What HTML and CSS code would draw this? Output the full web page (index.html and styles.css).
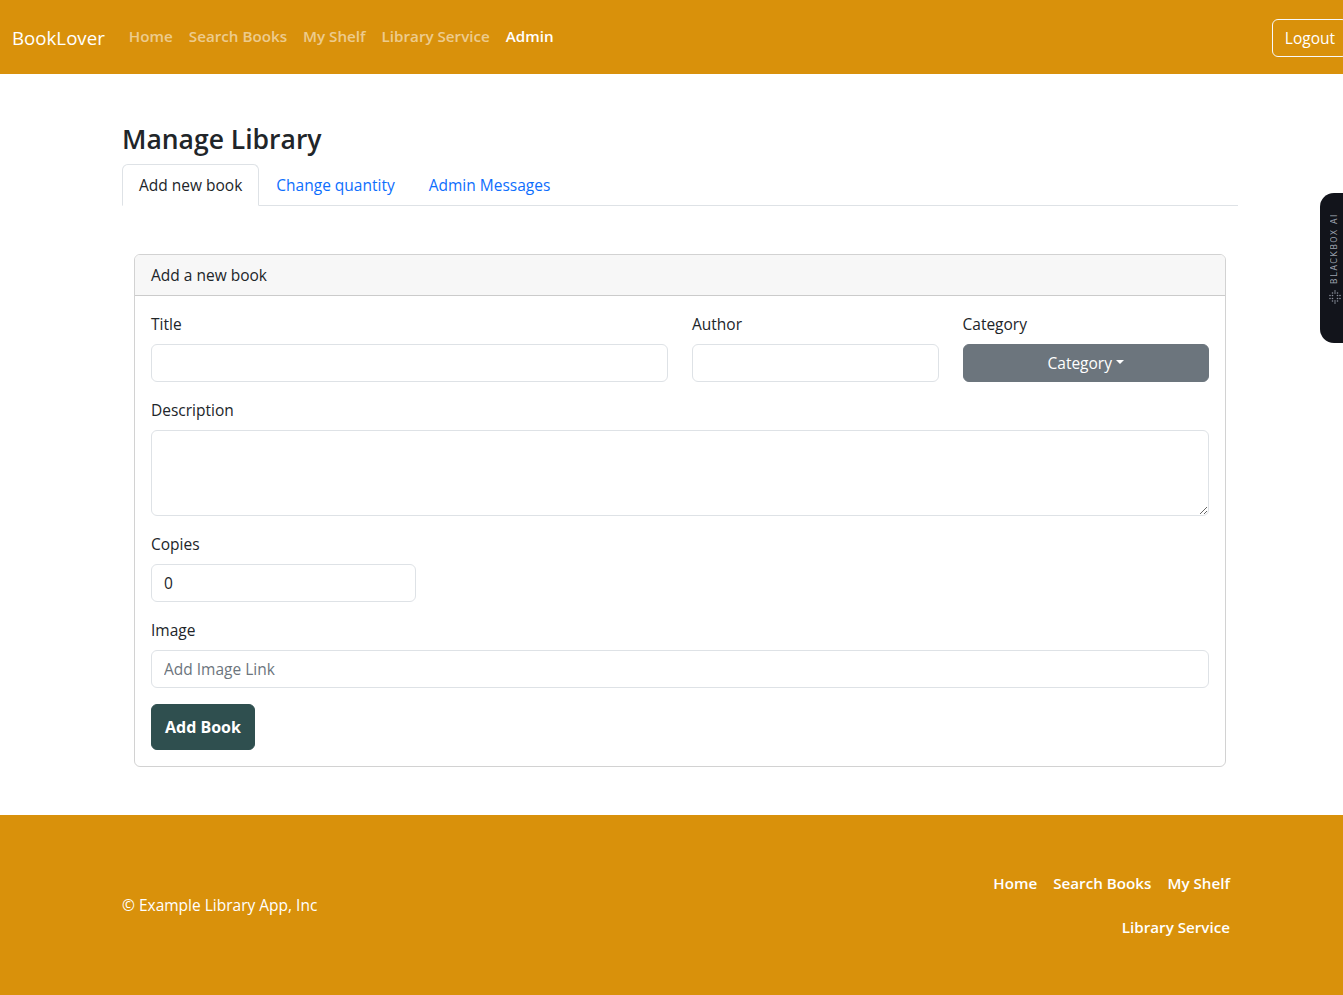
FILE: index.html
```html
<!DOCTYPE html>
<html lang="en">
<head>
<meta charset="utf-8">
<title>BookLover - Admin</title>
<link rel="stylesheet" href="styles.css">
</head>
<body>
<nav class="navbar">
  <a class="brand" href="#">BookLover</a>
  <ul class="nav-links">
    <li><a href="#">Home</a></li>
    <li><a href="#">Search Books</a></li>
    <li><a href="#">My Shelf</a></li>
    <li><a href="#">Library Service</a></li>
    <li><a class="active" href="#">Admin</a></li>
  </ul>
  <button class="btn-logout" type="button">Logout</button>
</nav>

<main class="container page">
  <h3 class="page-title">Manage Library</h3>
  <div class="tabs">
    <button class="tab active" type="button">Add new book</button>
    <button class="tab" type="button">Change quantity</button>
    <button class="tab" type="button">Admin Messages</button>
  </div>
  <div class="tab-content">
    <div class="card">
      <div class="card-header">Add a new book</div>
      <div class="card-body">
        <div class="row">
          <div class="field col-half">
            <label class="label">Title</label>
            <input class="input" type="text">
          </div>
          <div class="field col-quarter">
            <label class="label">Author</label>
            <input class="input" type="text">
          </div>
          <div class="field col-quarter">
            <label class="label">Category</label>
            <button class="btn-category" type="button">Category<span class="caret"></span></button>
          </div>
        </div>
        <div class="field">
          <label class="label">Description</label>
          <textarea class="input textarea" rows="3"></textarea>
        </div>
        <div class="field col-copies">
          <label class="label">Copies</label>
          <input class="input" type="number" value="0">
        </div>
        <div class="field">
          <label class="label">Image</label>
          <input class="input" type="text" placeholder="Add Image Link">
        </div>
        <button class="btn-add" type="button">Add Book</button>
      </div>
    </div>
  </div>
</main>

<footer class="footer">
  <div class="container footer-inner">
    <p class="copyright">© Example Library App, Inc</p>
    <ul class="footer-links">
      <li><a href="#">Home</a></li>
      <li><a href="#">Search Books</a></li>
      <li><a href="#">My Shelf</a></li>
      <li><a href="#">Library Service</a></li>
    </ul>
  </div>
</footer>

<div class="bb-widget">
  <span class="bb-text">BLACKBOX AI</span>
  <svg class="bb-icon" width="12" height="14" viewBox="0 0 12 14">
    <g fill="#8a8f9c">
      <circle cx="6" cy="1" r="0.8"/>
      <circle cx="3.5" cy="3" r="0.8"/><circle cx="6" cy="3" r="0.8"/><circle cx="8.5" cy="3" r="0.8"/>
      <circle cx="1" cy="5.5" r="0.8"/><circle cx="3.5" cy="5.5" r="0.8"/><circle cx="8.5" cy="5.5" r="0.8"/><circle cx="11" cy="5.5" r="0.8"/>
      <circle cx="1" cy="8.5" r="0.8"/><circle cx="3.5" cy="8.5" r="0.8"/><circle cx="8.5" cy="8.5" r="0.8"/><circle cx="11" cy="8.5" r="0.8"/>
      <circle cx="3.5" cy="11" r="0.8"/><circle cx="6" cy="11" r="0.8"/><circle cx="8.5" cy="11" r="0.8"/>
      <circle cx="6" cy="13" r="0.8"/>
    </g>
  </svg>
</div>
</body>
</html>
```
FILE: styles.css
```css
* { box-sizing: border-box; }

html { overflow: hidden; }

body {
  margin: 0;
  width: 1360px;
  font-family: "Open Sans", "Noto Sans", sans-serif;
  font-size: 15.5px;
  line-height: 24px;
  color: #212529;
  background: #fff;
}

a { text-decoration: none; }
ul { list-style: none; margin: 0; padding: 0; }

/* ---------- navbar ---------- */
.navbar {
  height: 74px;
  background: #d9910b;
  display: flex;
  align-items: center;
  padding: 0 12px;
}
.brand {
  color: #fff;
  font-size: 18.7px;
  line-height: 30px;
  margin-right: 16px;
  padding-top: 2px;
}
.nav-links {
  display: flex;
  flex: 1;
  margin-top: -2px;
}
.nav-links a {
  display: block;
  padding: 8px;
  color: rgba(255, 255, 255, 0.55);
  font-weight: 600;
  font-size: 15.2px;
}
.nav-links a.active { color: #fff; }

.btn-logout {
  font-family: inherit;
  font-size: 15.5px;
  line-height: 24px;
  color: #fff;
  background: transparent;
  border: 1px solid #f8f9fa;
  border-radius: 6px;
  padding: 6px 12px;
  margin-top: 1px;
}

/* ---------- main ---------- */
.container {
  max-width: 1140px;
  margin: 0 auto;
  padding: 0 12px;
}
.page { padding-top: 48px; }

.page-title {
  margin: 0 0 8px;
  font-size: 26.5px;
  font-weight: 600;
  line-height: 34px;
}

.tabs {
  display: flex;
  border-bottom: 1px solid #dee2e6;
}
.tab {
  font-family: inherit;
  font-size: 15.5px;
  line-height: 24px;
  background: none;
  border: 1px solid transparent;
  border-top-left-radius: 6px;
  border-top-right-radius: 6px;
  padding: 8px 16px;
  margin-bottom: -1px;
  color: #0d6efd;
}
.tab.active {
  color: #212529;
  background: #fff;
  border-color: #dee2e6 #dee2e6 #fff;
}

.tab-content {
  padding: 48px 12px 0;
}

.card {
  border: 1px solid rgba(0, 0, 0, 0.175);
  border-radius: 6px;
}
.card-header {
  padding: 8px 16px;
  background: #f7f7f7;
  border-bottom: 1px solid rgba(0, 0, 0, 0.175);
  border-radius: 5px 5px 0 0;
}
.card-body {
  padding: 16px;
}

.row {
  display: flex;
  gap: 24px;
}
.col-half { flex: 0 0 517px; }
.col-quarter { flex: 1 1 0; }
.col-copies { width: 265px; }

.field { margin-bottom: 16px; }
.label {
  display: block;
  margin-bottom: 8px;
}
.input {
  display: block;
  width: 100%;
  height: 38px;
  font-family: inherit;
  font-size: 15.5px;
  line-height: 24px;
  color: #212529;
  padding: 6px 12px;
  border: 1px solid #dee2e6;
  border-radius: 6px;
  background: #fff;
}
.input::placeholder { color: #6c757d; }
.textarea {
  height: 86px;
  resize: vertical;
}
input[type=number]::-webkit-inner-spin-button,
input[type=number]::-webkit-outer-spin-button { -webkit-appearance: none; margin: 0; }

.btn-category {
  width: 100%;
  height: 38px;
  font-family: inherit;
  font-size: 15.5px;
  line-height: 24px;
  color: #fff;
  background: #6c757d;
  border: 1px solid #6c757d;
  border-radius: 6px;
  padding: 6px 12px;
  display: flex;
  align-items: center;
  justify-content: center;
}
.caret {
  display: inline-block;
  margin-left: 4px;
  border-top: 4.5px solid #fff;
  border-left: 4px solid transparent;
  border-right: 4px solid transparent;
  margin-top: -2px;
}

.btn-add {
  font-family: inherit;
  font-size: 16px;
  font-weight: 700;
  line-height: 24px;
  color: #fff;
  background: #2f4f4f;
  border: 1px solid #2f4f4f;
  border-radius: 6px;
  padding: 10px 13px;
}

/* ---------- footer ---------- */
.footer {
  margin-top: 48px;
  background: #d9910b;
  padding: 48px 0;
}
.footer-inner {
  display: flex;
  align-items: center;
  justify-content: space-between;
}
.copyright {
  margin: 0;
  color: #fff;
}
.footer-links {
  display: flex;
  flex-wrap: wrap;
  justify-content: flex-end;
  width: 300px;
  row-gap: 4px;
}
.footer-links a {
  display: block;
  padding: 8px;
  color: #fff;
  font-weight: 600;
  font-size: 15.2px;
}

/* ---------- extension overlay ---------- */
.bb-widget {
  position: fixed;
  top: 193px;
  right: -12px;
  width: 35px;
  height: 150px;
  background: #12141b;
  border-radius: 14px 0 0 14px;
  display: flex;
  flex-direction: column;
  align-items: flex-start;
  padding-left: 10px;
  padding-top: 20px;
}
.bb-text {
  writing-mode: vertical-rl;
  transform: rotate(180deg);
  font-family: "DejaVu Sans", sans-serif;
  font-size: 8px;
  letter-spacing: 1.6px;
  color: #9aa0ad;
  line-height: 10px;
}
.bb-icon {
  margin-top: 6px;
  margin-left: -1px;
}
```
